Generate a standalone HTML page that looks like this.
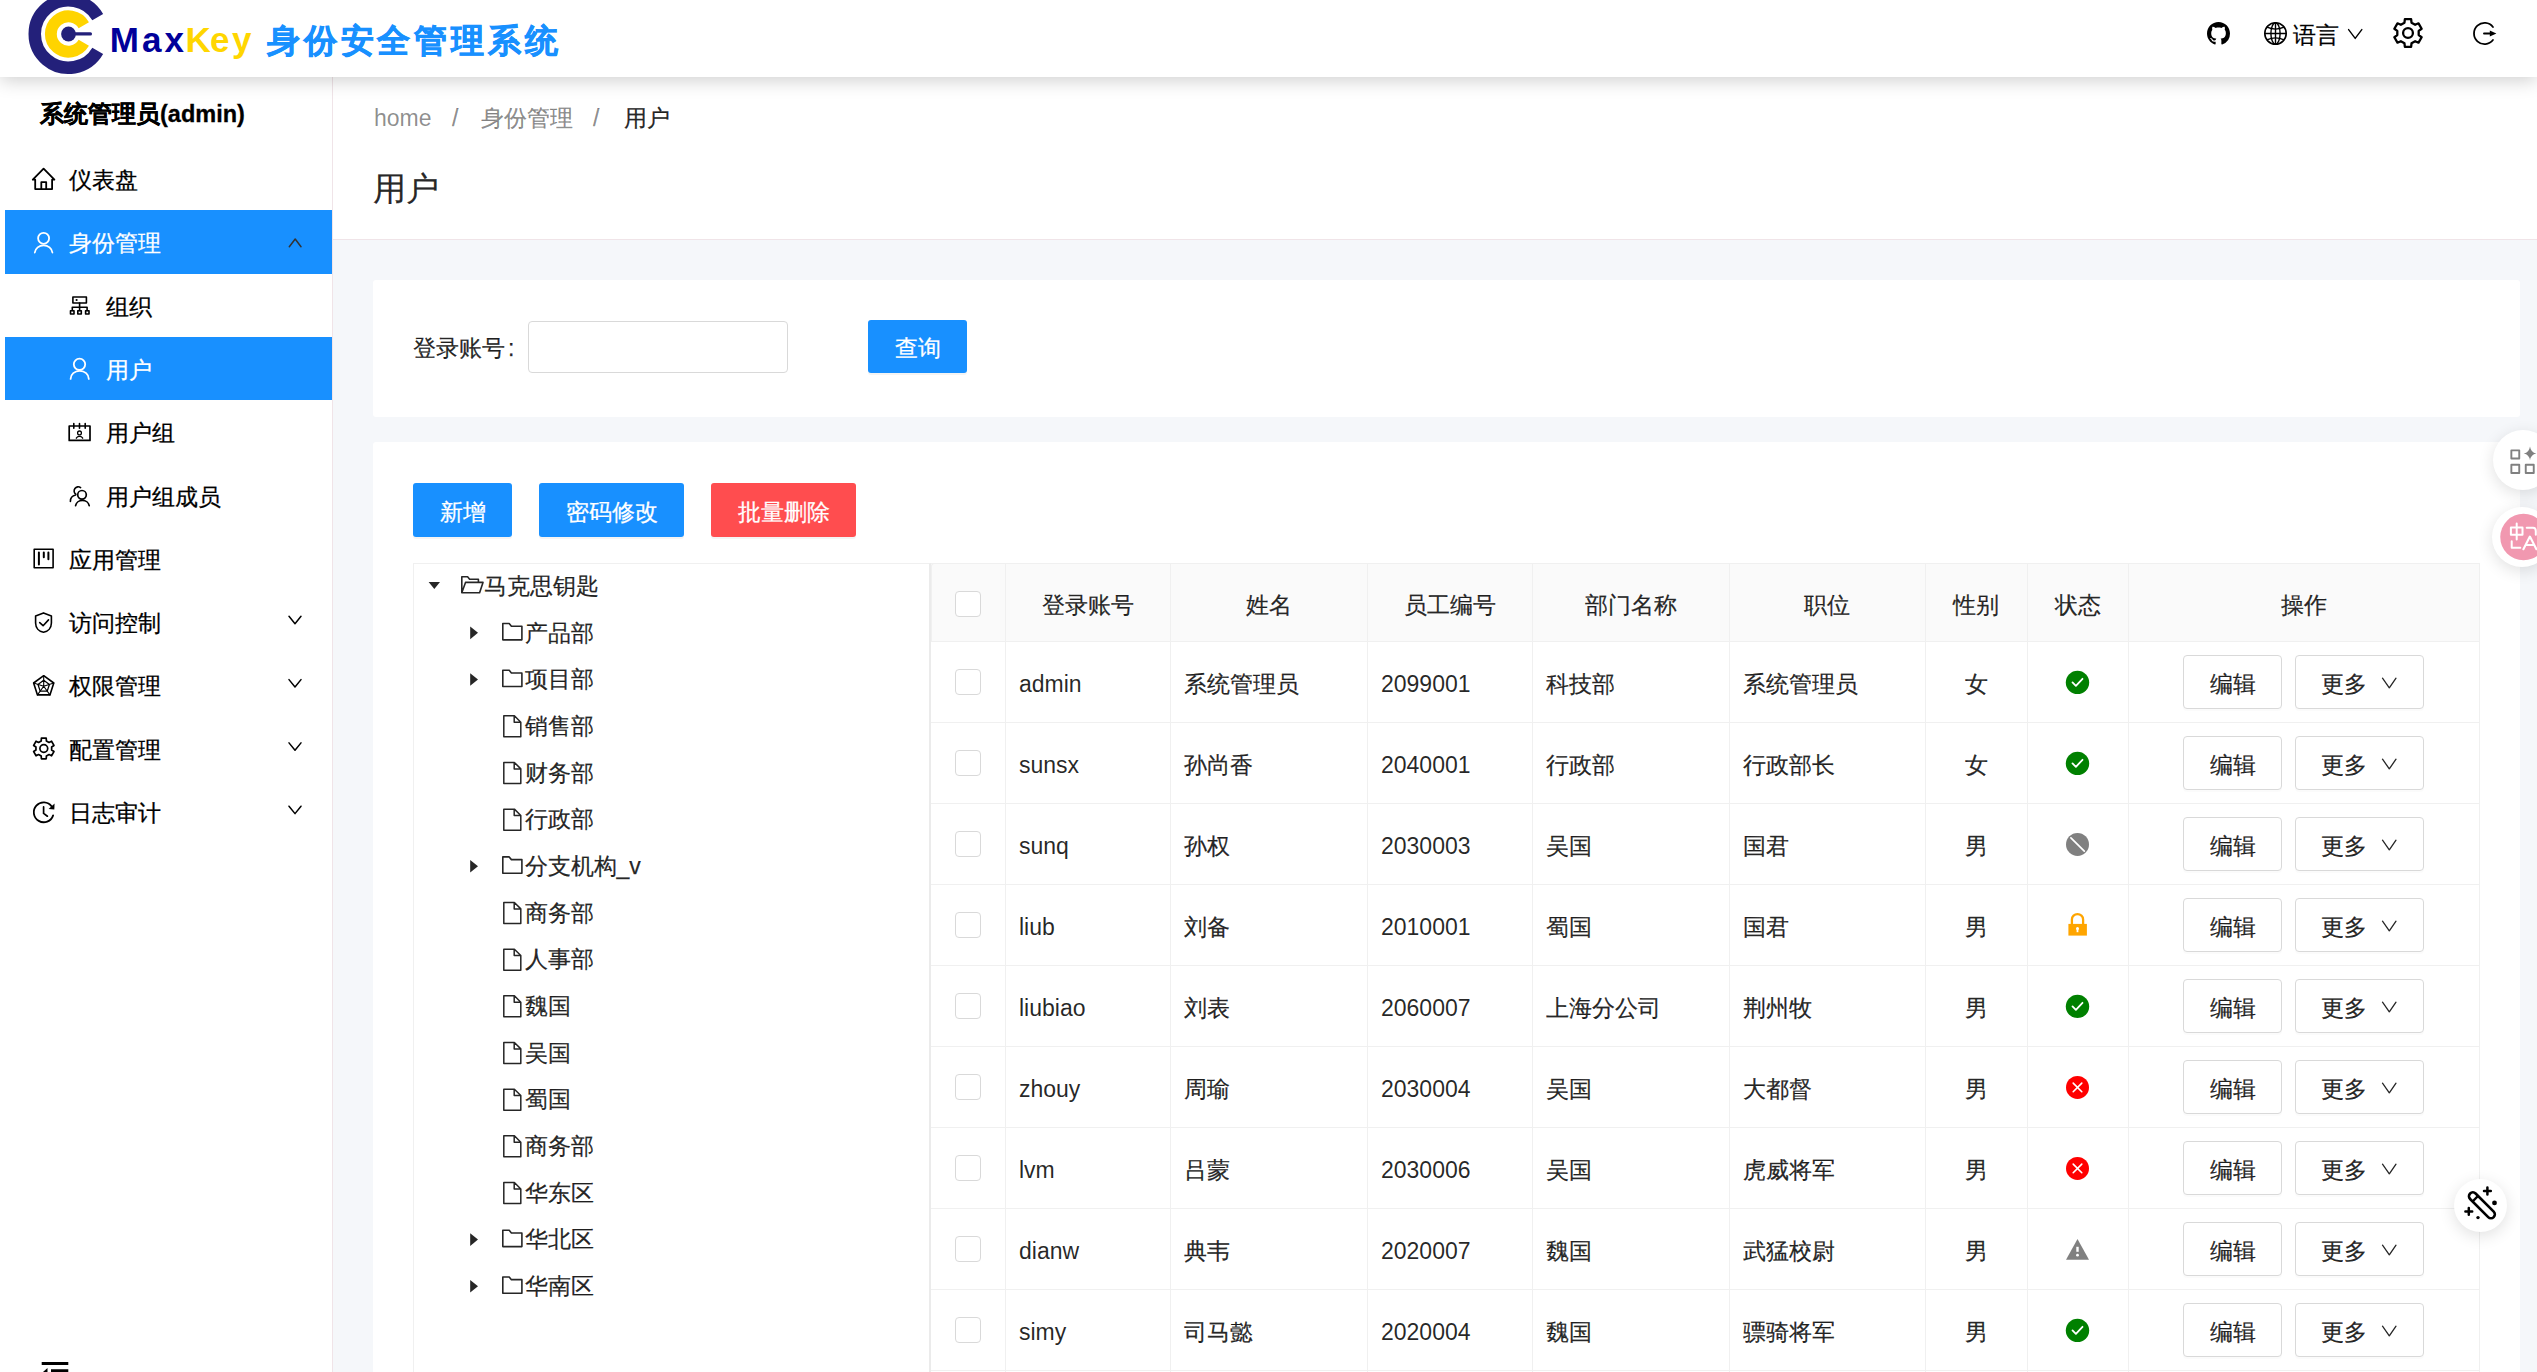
<!DOCTYPE html><html><head><meta charset="utf-8"><style>
*{box-sizing:border-box;margin:0;padding:0}
html,body{width:2537px;height:1372px;overflow:hidden}
body{position:relative;background:#f5f7fa;font-family:"Liberation Sans",sans-serif;font-size:23px;color:rgba(0,0,0,.85);-webkit-text-stroke:.25px currentColor}
.a{position:absolute;white-space:nowrap}
svg{display:block;overflow:visible}
#hdr{position:absolute;left:0;top:0;width:2537px;height:77px;background:#fff;box-shadow:0 3px 18px rgba(0,0,0,.2);z-index:5}
.mk{position:absolute;top:19.7px;font-weight:bold;font-size:35px;line-height:40px;-webkit-text-stroke:0}
.lt{-webkit-text-stroke:0 !important}
#ttl{position:absolute;left:267px;top:21px;font-weight:bold;font-size:33px;line-height:40px;color:#1890ff;letter-spacing:3.8px;white-space:nowrap;-webkit-text-stroke:.6px #1890ff}
#side{position:absolute;left:0;top:77px;width:333px;height:1295px;background:#fff;border-right:1px solid #f0e4e8;z-index:2}
.row{position:absolute;left:5px;width:327px;height:63.3px;color:#000}
.row.sel{background:#1890ff;color:#fff}
.row .t{position:absolute;top:2px;line-height:63.3px;white-space:nowrap}
#ph{position:absolute;left:333px;top:77px;width:2204px;height:163px;background:#fff;border-bottom:1px solid #f0e4e8}
.card{position:absolute;background:#fff;border-radius:3px}
.btn{position:absolute;height:54px;line-height:54px;padding-top:1.5px;text-align:center;color:#fff;background:#1890ff;border-radius:3px;box-shadow:0 2px 0 rgba(0,0,0,.045);white-space:nowrap}
.tn{position:absolute;height:46.67px;line-height:46.67px;white-space:nowrap;color:rgba(0,0,0,.85)}
.cell{position:absolute;white-space:nowrap;line-height:30px;padding-top:2.5px}
.hl{position:absolute;height:1px;background:#f0f0f0}
.vl{position:absolute;width:1px;background:#f0f0f0}
.cb{position:absolute;width:26px;height:26px;border:1px solid #d9d9d9;border-radius:4px;background:#fff}
.ob{position:absolute;height:54px;border:1px solid #d9d9d9;border-radius:4px;background:#fff;box-shadow:0 2px 0 rgba(0,0,0,.016);line-height:52px;padding-top:2px;white-space:nowrap}
.fb{position:absolute;border-radius:50%;background:#fff;box-shadow:0 4px 16px rgba(0,0,0,.12)}
</style></head><body>
<div id="hdr">
<svg class="a" style="left:0;top:0" width="110" height="77" viewBox="0 0 110 77">
<path d="M97.73 17.125 A33.75 33.75 0 1 0 97.73 50.875" fill="none" stroke="#23207a" stroke-width="12.5"/>
<path d="M83.79 25.17 A17.65 17.65 0 1 0 83.79 42.83" fill="none" stroke="#ffd400" stroke-width="11.9"/>
<circle cx="68.5" cy="34" r="7.4" fill="#23207a"/>
<rect x="68" y="32.2" width="24" height="3.2" rx="1.5" fill="#23207a"/></svg>
<span class="mk" style="left:109.8px;color:#00009a">M</span>
<span class="mk" style="left:142.1px;color:#00009a">a</span>
<span class="mk" style="left:164.6px;color:#00009a">x</span>
<span class="mk" style="left:185.5px;color:#ffd600">K</span>
<span class="mk" style="left:209.9px;color:#ffd600">e</span>
<span class="mk" style="left:232.1px;color:#ffd600">y</span>
<div id="ttl">身份安全管理系统</div>
<span class="a" style="left:2293px;top:19px;line-height:32px;color:#000">语言</span>
</div>
<div id="side">
<div class="a" style="left:40px;top:20.5px;font-weight:bold;line-height:32px;color:#000;font-size:23.5px;-webkit-text-stroke:.3px #000">系统管理员(admin)</div>
<div class="row" style="top:70.05px"><span class="t" style="left:64px">仪表盘</span></div>
<div class="row sel" style="top:133.35px"><span class="t" style="left:64px">身份管理</span></div>
<div class="row" style="top:196.65px"><span class="t" style="left:100.7px">组织</span></div>
<div class="row sel" style="top:259.95px"><span class="t" style="left:100.7px">用户</span></div>
<div class="row" style="top:323.25px"><span class="t" style="left:100.7px">用户组</span></div>
<div class="row" style="top:386.55px"><span class="t" style="left:100.7px">用户组成员</span></div>
<div class="row" style="top:449.85px"><span class="t" style="left:64px">应用管理</span></div>
<div class="row" style="top:513.15px"><span class="t" style="left:64px">访问控制</span></div>
<div class="row" style="top:576.45px"><span class="t" style="left:64px">权限管理</span></div>
<div class="row" style="top:639.75px"><span class="t" style="left:64px">配置管理</span></div>
<div class="row" style="top:703.05px"><span class="t" style="left:64px">日志审计</span></div>
</div>
<div id="ph">
<span class="a lt" style="left:41px;top:25px;line-height:32px;color:rgba(0,0,0,.45)">home</span>
<span class="a" style="left:119px;top:25px;line-height:32px;color:rgba(0,0,0,.45)">/</span>
<span class="a" style="left:148px;top:25px;line-height:32px;color:rgba(0,0,0,.45)">身份管理</span>
<span class="a" style="left:260px;top:25px;line-height:32px;color:rgba(0,0,0,.45)">/</span>
<span class="a" style="left:291px;top:25px;line-height:32px;color:rgba(0,0,0,.85)">用户</span>
<span class="a" style="left:40px;top:91.5px;line-height:40px;font-size:33px;color:rgba(0,0,0,.85)">用户</span>
</div>
<div class="card" style="left:373px;top:280px;width:2147px;height:137px"></div>
<span class="a" style="left:413px;top:332px;line-height:32px">登录账号<span style="margin-left:3px">:</span></span>
<div class="a" style="left:528px;top:321px;width:260px;height:52px;border:1px solid #d9d9d9;border-radius:4px;background:#fff"></div>
<div class="btn" style="left:868px;top:320px;width:99px;height:53px;line-height:53px">查询</div>
<div class="card" style="left:373px;top:442px;width:2147px;height:1000px"></div>
<div class="btn" style="left:413px;top:483px;width:99px">新增</div>
<div class="btn" style="left:539px;top:483px;width:145px">密码修改</div>
<div class="btn" style="left:711px;top:483px;width:145px;background:#ff4d4f">批量删除</div>
<div class="a" style="left:413px;top:563px;width:518px;height:900px;border:1px solid #f0f0f0;border-right:2px solid #ebebeb"></div>
<span class="tn" style="left:484px;top:562.90px">马克思钥匙</span>
<span class="tn" style="left:524.5px;top:609.57px">产品部</span>
<span class="tn" style="left:524.5px;top:656.24px">项目部</span>
<span class="tn" style="left:524.5px;top:702.91px">销售部</span>
<span class="tn" style="left:524.5px;top:749.58px">财务部</span>
<span class="tn" style="left:524.5px;top:796.25px">行政部</span>
<span class="tn" style="left:524.5px;top:842.92px">分支机构_v</span>
<span class="tn" style="left:524.5px;top:889.59px">商务部</span>
<span class="tn" style="left:524.5px;top:936.26px">人事部</span>
<span class="tn" style="left:524.5px;top:982.93px">魏国</span>
<span class="tn" style="left:524.5px;top:1029.60px">吴国</span>
<span class="tn" style="left:524.5px;top:1076.27px">蜀国</span>
<span class="tn" style="left:524.5px;top:1122.94px">商务部</span>
<span class="tn" style="left:524.5px;top:1169.61px">华东区</span>
<span class="tn" style="left:524.5px;top:1216.28px">华北区</span>
<span class="tn" style="left:524.5px;top:1262.95px">华南区</span>
<div class="a" style="left:931px;top:563px;width:1549px;height:78px;background:#fafafa;border-left:1px solid #f0f0f0;border-top:1px solid #f0f0f0;border-top-left-radius:3px"></div>
<div class="hl" style="left:931px;top:563px;width:1549px"></div>
<div class="hl" style="left:931px;top:641.2px;width:1549px"></div>
<div class="hl" style="left:931px;top:722.2px;width:1549px"></div>
<div class="hl" style="left:931px;top:803.2px;width:1549px"></div>
<div class="hl" style="left:931px;top:884.2px;width:1549px"></div>
<div class="hl" style="left:931px;top:965.2px;width:1549px"></div>
<div class="hl" style="left:931px;top:1046.2px;width:1549px"></div>
<div class="hl" style="left:931px;top:1127.2px;width:1549px"></div>
<div class="hl" style="left:931px;top:1208.2px;width:1549px"></div>
<div class="hl" style="left:931px;top:1289.2px;width:1549px"></div>
<div class="hl" style="left:931px;top:1370.2px;width:1549px"></div>
<div class="vl" style="left:1005px;top:563px;height:820px"></div>
<div class="vl" style="left:1170px;top:563px;height:820px"></div>
<div class="vl" style="left:1367px;top:563px;height:820px"></div>
<div class="vl" style="left:1532px;top:563px;height:820px"></div>
<div class="vl" style="left:1729px;top:563px;height:820px"></div>
<div class="vl" style="left:1925px;top:563px;height:820px"></div>
<div class="vl" style="left:2027px;top:563px;height:820px"></div>
<div class="vl" style="left:2128px;top:563px;height:820px"></div>
<div class="vl" style="left:2479px;top:563px;height:820px"></div>
<div class="cell" style="left:1005px;width:165px;top:587px;text-align:center">登录账号</div>
<div class="cell" style="left:1170px;width:197px;top:587px;text-align:center">姓名</div>
<div class="cell" style="left:1367px;width:165px;top:587px;text-align:center">员工编号</div>
<div class="cell" style="left:1532px;width:197px;top:587px;text-align:center">部门名称</div>
<div class="cell" style="left:1729px;width:196px;top:587px;text-align:center">职位</div>
<div class="cell" style="left:1925px;width:102px;top:587px;text-align:center">性别</div>
<div class="cell" style="left:2027px;width:101px;top:587px;text-align:center">状态</div>
<div class="cell" style="left:2128px;width:351px;top:587px;text-align:center">操作</div>
<div class="cb" style="left:955px;top:591px"></div>
<div class="cb" style="left:955px;top:668.7px"></div>
<div class="cell lt" style="left:1019px;top:666.7px">admin</div>
<div class="cell" style="left:1184px;top:666.7px">系统管理员</div>
<div class="cell lt" style="left:1381px;top:666.7px">2099001</div>
<div class="cell" style="left:1546px;top:666.7px">科技部</div>
<div class="cell" style="left:1743px;top:666.7px">系统管理员</div>
<div class="cell" style="left:1925px;width:102px;top:666.7px;text-align:center">女</div>
<div class="ob" style="left:2183px;top:655.2px;width:99px;text-align:center">编辑</div>
<div class="ob" style="left:2295px;top:655.2px;width:129px;padding-left:25px">更多</div>
<div class="cb" style="left:955px;top:749.7px"></div>
<div class="cell lt" style="left:1019px;top:747.7px">sunsx</div>
<div class="cell" style="left:1184px;top:747.7px">孙尚香</div>
<div class="cell lt" style="left:1381px;top:747.7px">2040001</div>
<div class="cell" style="left:1546px;top:747.7px">行政部</div>
<div class="cell" style="left:1743px;top:747.7px">行政部长</div>
<div class="cell" style="left:1925px;width:102px;top:747.7px;text-align:center">女</div>
<div class="ob" style="left:2183px;top:736.2px;width:99px;text-align:center">编辑</div>
<div class="ob" style="left:2295px;top:736.2px;width:129px;padding-left:25px">更多</div>
<div class="cb" style="left:955px;top:830.7px"></div>
<div class="cell lt" style="left:1019px;top:828.7px">sunq</div>
<div class="cell" style="left:1184px;top:828.7px">孙权</div>
<div class="cell lt" style="left:1381px;top:828.7px">2030003</div>
<div class="cell" style="left:1546px;top:828.7px">吴国</div>
<div class="cell" style="left:1743px;top:828.7px">国君</div>
<div class="cell" style="left:1925px;width:102px;top:828.7px;text-align:center">男</div>
<div class="ob" style="left:2183px;top:817.2px;width:99px;text-align:center">编辑</div>
<div class="ob" style="left:2295px;top:817.2px;width:129px;padding-left:25px">更多</div>
<div class="cb" style="left:955px;top:911.7px"></div>
<div class="cell lt" style="left:1019px;top:909.7px">liub</div>
<div class="cell" style="left:1184px;top:909.7px">刘备</div>
<div class="cell lt" style="left:1381px;top:909.7px">2010001</div>
<div class="cell" style="left:1546px;top:909.7px">蜀国</div>
<div class="cell" style="left:1743px;top:909.7px">国君</div>
<div class="cell" style="left:1925px;width:102px;top:909.7px;text-align:center">男</div>
<div class="ob" style="left:2183px;top:898.2px;width:99px;text-align:center">编辑</div>
<div class="ob" style="left:2295px;top:898.2px;width:129px;padding-left:25px">更多</div>
<div class="cb" style="left:955px;top:992.7px"></div>
<div class="cell lt" style="left:1019px;top:990.7px">liubiao</div>
<div class="cell" style="left:1184px;top:990.7px">刘表</div>
<div class="cell lt" style="left:1381px;top:990.7px">2060007</div>
<div class="cell" style="left:1546px;top:990.7px">上海分公司</div>
<div class="cell" style="left:1743px;top:990.7px">荆州牧</div>
<div class="cell" style="left:1925px;width:102px;top:990.7px;text-align:center">男</div>
<div class="ob" style="left:2183px;top:979.2px;width:99px;text-align:center">编辑</div>
<div class="ob" style="left:2295px;top:979.2px;width:129px;padding-left:25px">更多</div>
<div class="cb" style="left:955px;top:1073.7px"></div>
<div class="cell lt" style="left:1019px;top:1071.7px">zhouy</div>
<div class="cell" style="left:1184px;top:1071.7px">周瑜</div>
<div class="cell lt" style="left:1381px;top:1071.7px">2030004</div>
<div class="cell" style="left:1546px;top:1071.7px">吴国</div>
<div class="cell" style="left:1743px;top:1071.7px">大都督</div>
<div class="cell" style="left:1925px;width:102px;top:1071.7px;text-align:center">男</div>
<div class="ob" style="left:2183px;top:1060.2px;width:99px;text-align:center">编辑</div>
<div class="ob" style="left:2295px;top:1060.2px;width:129px;padding-left:25px">更多</div>
<div class="cb" style="left:955px;top:1154.7px"></div>
<div class="cell lt" style="left:1019px;top:1152.7px">lvm</div>
<div class="cell" style="left:1184px;top:1152.7px">吕蒙</div>
<div class="cell lt" style="left:1381px;top:1152.7px">2030006</div>
<div class="cell" style="left:1546px;top:1152.7px">吴国</div>
<div class="cell" style="left:1743px;top:1152.7px">虎威将军</div>
<div class="cell" style="left:1925px;width:102px;top:1152.7px;text-align:center">男</div>
<div class="ob" style="left:2183px;top:1141.2px;width:99px;text-align:center">编辑</div>
<div class="ob" style="left:2295px;top:1141.2px;width:129px;padding-left:25px">更多</div>
<div class="cb" style="left:955px;top:1235.7px"></div>
<div class="cell lt" style="left:1019px;top:1233.7px">dianw</div>
<div class="cell" style="left:1184px;top:1233.7px">典韦</div>
<div class="cell lt" style="left:1381px;top:1233.7px">2020007</div>
<div class="cell" style="left:1546px;top:1233.7px">魏国</div>
<div class="cell" style="left:1743px;top:1233.7px">武猛校尉</div>
<div class="cell" style="left:1925px;width:102px;top:1233.7px;text-align:center">男</div>
<div class="ob" style="left:2183px;top:1222.2px;width:99px;text-align:center">编辑</div>
<div class="ob" style="left:2295px;top:1222.2px;width:129px;padding-left:25px">更多</div>
<div class="cb" style="left:955px;top:1316.7px"></div>
<div class="cell lt" style="left:1019px;top:1314.7px">simy</div>
<div class="cell" style="left:1184px;top:1314.7px">司马懿</div>
<div class="cell lt" style="left:1381px;top:1314.7px">2020004</div>
<div class="cell" style="left:1546px;top:1314.7px">魏国</div>
<div class="cell" style="left:1743px;top:1314.7px">骠骑将军</div>
<div class="cell" style="left:1925px;width:102px;top:1314.7px;text-align:center">男</div>
<div class="ob" style="left:2183px;top:1303.2px;width:99px;text-align:center">编辑</div>
<div class="ob" style="left:2295px;top:1303.2px;width:129px;padding-left:25px">更多</div>
<div class="fb" style="left:2493px;top:430px;width:60px;height:60px;z-index:8"></div>
<div class="fb" style="left:2492px;top:507px;width:60px;height:60px;z-index:8"></div>
<div class="fb" style="left:2453.5px;top:1179px;width:53px;height:53px;z-index:8"></div>
<svg class="a" style="left:0;top:0;z-index:10" width="2537" height="1372" viewBox="0 0 2537 1372">
<path d="M35.2 189.1 V179.7 H32.8 L43.6 168.6 L54.4 179.7 H52.1 V189.1 Z M41.3 189.1 V182.2 H46.2 V189.1" fill="none" stroke="#000" stroke-width="1.8" stroke-linecap="round" stroke-linejoin="round" />
<circle cx="43.6" cy="238.3" r="5.5" fill="none" stroke="#fff" stroke-width="1.8"/>
<path d="M34.8 252.5 A8.85 8 0 0 1 52.4 252.5" fill="none" stroke="#fff" stroke-width="1.8" stroke-linecap="round" stroke-linejoin="round" stroke-linecap="butt"/>
<path d="M289.3 246.7 L295.2 239 L301 246.7" fill="none" stroke="#333" stroke-width="1.5" stroke-linecap="round" stroke-linejoin="round" />
<path d="M72.9 297 H86.4 V303 H72.9 Z" fill="none" stroke="#000" stroke-width="1.6" stroke-linecap="round" stroke-linejoin="round" />
<circle cx="76.6" cy="300" r="1.1" fill="#000"/>
<path d="M79.6 303 V307.3 M72.3 307.3 H87.1 M72.3 307.3 V310.5 M79.6 307.3 V310.5 M87.1 307.3 V310.5" fill="none" stroke="#000" stroke-width="1.6" stroke-linecap="round" stroke-linejoin="round" stroke-linecap="butt"/>
<path d="M70.5 310.8 H74 V314 H70.5 Z M77.8 310.8 H81.3 V314 H77.8 Z M85.6 310.8 H89 V314 H85.6 Z" fill="none" stroke="#000" stroke-width="1.6" stroke-linecap="round" stroke-linejoin="round" />
<circle cx="79.5" cy="364.3" r="5.7" fill="none" stroke="#fff" stroke-width="1.8"/>
<path d="M70.6 378.9 A9 8 0 0 1 88.8 378.9" fill="none" stroke="#fff" stroke-width="1.8" stroke-linecap="round" stroke-linejoin="round" stroke-linecap="butt"/>
<path d="M69.2 426 H90 V440.4 H69.2 Z" fill="none" stroke="#000" stroke-width="1.7" stroke-linecap="round" stroke-linejoin="round" />
<path d="M73.8 423.6 V428.3 M79.5 423.6 V428.3 M85.2 423.6 V428.3" fill="none" stroke="#000" stroke-width="1.6" stroke-linecap="round" stroke-linejoin="round" />
<circle cx="79.5" cy="432.9" r="1.9" fill="none" stroke="#000" stroke-width="1.3"/>
<path d="M76.3 438.2 A3.6 3.2 0 0 1 82.7 438.2" fill="none" stroke="#000" stroke-width="1.3" stroke-linecap="round" stroke-linejoin="round" />
<circle cx="82" cy="494.8" r="4.3" fill="none" stroke="#000" stroke-width="1.7"/>
<path d="M75.6 505.6 A6.9 6.2 0 0 1 89.2 505.6" fill="none" stroke="#000" stroke-width="1.7" stroke-linecap="round" stroke-linejoin="round" stroke-linecap="butt"/>
<path d="M80.6 487.6 A4 4 0 1 0 75.8 494.2" fill="none" stroke="#000" stroke-width="1.6" stroke-linecap="round" stroke-linejoin="round" />
<path d="M70.4 501.4 A6.5 6.5 0 0 1 75.6 495" fill="none" stroke="#000" stroke-width="1.6" stroke-linecap="round" stroke-linejoin="round" />
<path d="M34.2 549.2 H53.1 V567.7 H34.2 Z" fill="none" stroke="#000" stroke-width="1.6" stroke-linecap="round" stroke-linejoin="round" stroke-linejoin="miter"/>
<path d="M38.9 552.6 V564.6 M43.8 552.6 V557.2 M48.4 552.6 V559.2" fill="none" stroke="#000" stroke-width="2.0" stroke-linecap="round" stroke-linejoin="round" stroke-linecap="butt"/>
<path d="M43.5 612.9 L35.6 615.9 V623 C35.6 627.8 39 631.4 43.5 632.3 C48 631.4 51.4 627.8 51.4 623 V615.9 Z" fill="none" stroke="#000" stroke-width="1.6" stroke-linecap="round" stroke-linejoin="round" />
<path d="M39.7 622.6 L43.1 625.7 L48.5 619.9" fill="none" stroke="#000" stroke-width="1.6" stroke-linecap="round" stroke-linejoin="round" />
<path d="M43.70 675.70 L33.62 683.02 L37.47 694.88 L49.93 694.88 L53.78 683.02 Z" fill="none" stroke="#000" stroke-width="1.6" stroke-linecap="round" stroke-linejoin="round" />
<path d="M43.70 680.30 L37.99 684.45 L40.17 691.15 L47.23 691.15 L49.41 684.45 Z" fill="none" stroke="#000" stroke-width="1.3" stroke-linecap="round" stroke-linejoin="round" />
<path d="M43.7 686.3 L43.70 675.70 M43.7 686.3 L33.62 683.02 M43.7 686.3 L37.47 694.88 M43.7 686.3 L49.93 694.88 M43.7 686.3 L53.78 683.02" fill="none" stroke="#000" stroke-width="1.1" stroke-linecap="round" stroke-linejoin="round" />
<path d="M46.39 740.93 L46.22 738.18 L41.38 738.18 L41.21 740.93 L38.54 742.47 L36.07 741.25 L33.65 745.43 L35.95 746.96 L35.95 750.04 L33.65 751.57 L36.07 755.75 L38.54 754.53 L41.21 756.07 L41.38 758.82 L46.22 758.82 L46.39 756.07 L49.06 754.53 L51.53 755.75 L53.95 751.57 L51.65 750.04 L51.65 746.96 L53.95 745.43 L51.53 741.25 L49.06 742.47 Z" fill="none" stroke="#000" stroke-width="1.7" stroke-linecap="round" stroke-linejoin="round" />
<circle cx="43.8" cy="748.5" r="3.9" fill="none" stroke="#000" stroke-width="1.7"/>
<path d="M53.12 815.36 A9.9 9.9 0 1 1 51.71 806.48" fill="none" stroke="#000" stroke-width="1.8" stroke-linecap="round" stroke-linejoin="round" stroke-linecap="butt"/>
<path d="M54.6 803.6 L54.3 809.6 L48.6 808.9 Z" fill="#000" />
<path d="M43.6 806.9 V813.4 L47.4 816.2" fill="none" stroke="#000" stroke-width="1.7" stroke-linecap="round" stroke-linejoin="round" />
<path d="M289 616.30 L295 623.70 L301 616.30" fill="none" stroke="#000" stroke-width="1.5" stroke-linecap="round" stroke-linejoin="round" />
<path d="M289 679.60 L295 687.00 L301 679.60" fill="none" stroke="#000" stroke-width="1.5" stroke-linecap="round" stroke-linejoin="round" />
<path d="M289 742.90 L295 750.30 L301 742.90" fill="none" stroke="#000" stroke-width="1.5" stroke-linecap="round" stroke-linejoin="round" />
<path d="M289 806.20 L295 813.60 L301 806.20" fill="none" stroke="#000" stroke-width="1.5" stroke-linecap="round" stroke-linejoin="round" />
<path d="M41.7 1362 H68.3 V1365 H41.7 Z M51 1369.2 H68.3 V1372.5 H51 Z M47.5 1368 L43 1372 L47.5 1376 Z" fill="#000" />
<g transform="translate(2207 22) scale(1.4375)"><path d="M8 0C3.58 0 0 3.58 0 8c0 3.54 2.29 6.53 5.47 7.59.4.07.55-.17.55-.38 0-.19-.01-.82-.01-1.49-2.01.37-2.53-.49-2.69-.94-.09-.23-.48-.94-.82-1.13-.28-.15-.68-.52-.01-.53.63-.01 1.08.58 1.23.82.72 1.21 1.87.87 2.33.66.07-.52.28-.87.51-1.07-1.78-.2-3.64-.89-3.64-3.95 0-.87.31-1.59.82-2.15-.08-.2-.36-1.02.08-2.12 0 0 .67-.21 2.2.82.64-.18 1.32-.27 2-.27.68 0 1.36.09 2 .27 1.53-1.04 2.2-.82 2.2-.82.44 1.1.16 1.92.08 2.12.51.56.82 1.27.82 2.15 0 3.07-1.87 3.75-3.65 3.95.29.25.54.73.54 1.48 0 1.07-.01 1.93-.01 2.2 0 .21.15.46.55.38A8.013 8.013 0 0016 8c0-4.42-3.58-8-8-8z" fill="#000"/></g>
<circle cx="2275.5" cy="33.5" r="10.7" fill="none" stroke="#000" stroke-width="1.6"/>
<ellipse cx="2275.5" cy="33.5" rx="4.6" ry="10.7" fill="none" stroke="#000" stroke-width="1.4"/>
<path d="M2275.5 22.8 V44.2 M2264.8 33.5 H2286.2" fill="none" stroke="#000" stroke-width="1.4" stroke-linecap="round" stroke-linejoin="round" />
<path d="M2267.0 27.2 Q2275.5 30.9 2284.0 27.2 M2267.0 39.8 Q2275.5 36.1 2284.0 39.8" fill="none" stroke="#000" stroke-width="1.3" stroke-linecap="round" stroke-linejoin="round" />
<path d="M2348.6 29.6 L2355.2 38.4 L2361.8 29.6" fill="none" stroke="#000" stroke-width="1.4" stroke-linecap="round" stroke-linejoin="round" />
<path d="M2411.53 22.69 L2411.12 19.04 L2404.88 19.04 L2404.47 22.69 L2400.84 24.79 L2397.47 23.32 L2394.35 28.72 L2397.30 30.90 L2397.30 35.10 L2394.35 37.28 L2397.47 42.68 L2400.84 41.21 L2404.47 43.31 L2404.88 46.96 L2411.12 46.96 L2411.53 43.31 L2415.16 41.21 L2418.53 42.68 L2421.65 37.28 L2418.70 35.10 L2418.70 30.90 L2421.65 28.72 L2418.53 23.32 L2415.16 24.79 Z" fill="none" stroke="#000" stroke-width="2.3" stroke-linecap="round" stroke-linejoin="round" />
<circle cx="2408" cy="33" r="4.9" fill="none" stroke="#000" stroke-width="2.3"/>
<path d="M2492.95 26.97 A10.6 10.6 0 1 0 2492.95 40.03" fill="none" stroke="#000" stroke-width="1.8" stroke-linecap="round" stroke-linejoin="round" stroke-linecap="butt"/>
<path d="M2484 33.5 H2491" fill="none" stroke="#000" stroke-width="1.9" stroke-linecap="round" stroke-linejoin="round" stroke-linecap="butt"/>
<path d="M2489.8 30.6 L2496.4 33.5 L2489.8 36.5 Z" fill="#000" />
<path d="M428.6 582 H440 L434.3 589 Z" fill="#262626" />
<path d="M461.8 592.80 V576.80 H467.6 L469.6 579.20 H478.4 V582.40 M461.8 592.80 L465.5 582.40 H483 L479.6 592.80 Z" fill="none" stroke="#262626" stroke-width="1.6" stroke-linecap="round" stroke-linejoin="round" stroke-linejoin="miter"/>
<path d="M470.2 626.57 L478 632.87 L470.2 639.17 Z" fill="#262626" />
<path d="M502.8 639.87 V623.57 H509.2 L511.4 626.27 H521.9 V639.87 Z" fill="none" stroke="#262626" stroke-width="1.6" stroke-linecap="round" stroke-linejoin="round" stroke-linejoin="miter"/>
<path d="M470.2 673.24 L478 679.54 L470.2 685.84 Z" fill="#262626" />
<path d="M502.8 686.54 V670.24 H509.2 L511.4 672.94 H521.9 V686.54 Z" fill="none" stroke="#262626" stroke-width="1.6" stroke-linecap="round" stroke-linejoin="round" stroke-linejoin="miter"/>
<path d="M503.8 715.81 H514.4 L520.8 722.21 V736.81 H503.8 Z M514.2 715.81 V722.21 H520.8" fill="none" stroke="#262626" stroke-width="1.5" stroke-linecap="round" stroke-linejoin="round" stroke-linejoin="miter"/>
<path d="M503.8 762.48 H514.4 L520.8 768.88 V783.48 H503.8 Z M514.2 762.48 V768.88 H520.8" fill="none" stroke="#262626" stroke-width="1.5" stroke-linecap="round" stroke-linejoin="round" stroke-linejoin="miter"/>
<path d="M503.8 809.15 H514.4 L520.8 815.55 V830.15 H503.8 Z M514.2 809.15 V815.55 H520.8" fill="none" stroke="#262626" stroke-width="1.5" stroke-linecap="round" stroke-linejoin="round" stroke-linejoin="miter"/>
<path d="M470.2 859.92 L478 866.22 L470.2 872.52 Z" fill="#262626" />
<path d="M502.8 873.22 V856.92 H509.2 L511.4 859.62 H521.9 V873.22 Z" fill="none" stroke="#262626" stroke-width="1.6" stroke-linecap="round" stroke-linejoin="round" stroke-linejoin="miter"/>
<path d="M503.8 902.49 H514.4 L520.8 908.89 V923.49 H503.8 Z M514.2 902.49 V908.89 H520.8" fill="none" stroke="#262626" stroke-width="1.5" stroke-linecap="round" stroke-linejoin="round" stroke-linejoin="miter"/>
<path d="M503.8 949.16 H514.4 L520.8 955.56 V970.16 H503.8 Z M514.2 949.16 V955.56 H520.8" fill="none" stroke="#262626" stroke-width="1.5" stroke-linecap="round" stroke-linejoin="round" stroke-linejoin="miter"/>
<path d="M503.8 995.83 H514.4 L520.8 1002.23 V1016.83 H503.8 Z M514.2 995.83 V1002.23 H520.8" fill="none" stroke="#262626" stroke-width="1.5" stroke-linecap="round" stroke-linejoin="round" stroke-linejoin="miter"/>
<path d="M503.8 1042.50 H514.4 L520.8 1048.90 V1063.50 H503.8 Z M514.2 1042.50 V1048.90 H520.8" fill="none" stroke="#262626" stroke-width="1.5" stroke-linecap="round" stroke-linejoin="round" stroke-linejoin="miter"/>
<path d="M503.8 1089.17 H514.4 L520.8 1095.57 V1110.17 H503.8 Z M514.2 1089.17 V1095.57 H520.8" fill="none" stroke="#262626" stroke-width="1.5" stroke-linecap="round" stroke-linejoin="round" stroke-linejoin="miter"/>
<path d="M503.8 1135.84 H514.4 L520.8 1142.24 V1156.84 H503.8 Z M514.2 1135.84 V1142.24 H520.8" fill="none" stroke="#262626" stroke-width="1.5" stroke-linecap="round" stroke-linejoin="round" stroke-linejoin="miter"/>
<path d="M503.8 1182.51 H514.4 L520.8 1188.91 V1203.51 H503.8 Z M514.2 1182.51 V1188.91 H520.8" fill="none" stroke="#262626" stroke-width="1.5" stroke-linecap="round" stroke-linejoin="round" stroke-linejoin="miter"/>
<path d="M470.2 1233.28 L478 1239.58 L470.2 1245.88 Z" fill="#262626" />
<path d="M502.8 1246.58 V1230.28 H509.2 L511.4 1232.98 H521.9 V1246.58 Z" fill="none" stroke="#262626" stroke-width="1.6" stroke-linecap="round" stroke-linejoin="round" stroke-linejoin="miter"/>
<path d="M470.2 1279.95 L478 1286.25 L470.2 1292.55 Z" fill="#262626" />
<path d="M502.8 1293.25 V1276.95 H509.2 L511.4 1279.65 H521.9 V1293.25 Z" fill="none" stroke="#262626" stroke-width="1.6" stroke-linecap="round" stroke-linejoin="round" stroke-linejoin="miter"/>
<circle cx="2077.5" cy="682.4000000000001" r="11.7" fill="#008000"/>
<path d="M2072.5 682.4000000000001 L2075.9 685.8000000000001 L2082.5 678.8000000000001" fill="none" stroke="#fff" stroke-width="1.8" stroke-linecap="round" stroke-linejoin="round" />
<path d="M2382.5 678.20 L2389.3 687.80 L2396 678.20" fill="none" stroke="#262626" stroke-width="1.3" stroke-linecap="round" stroke-linejoin="round" />
<circle cx="2077.5" cy="763.4000000000001" r="11.7" fill="#008000"/>
<path d="M2072.5 763.4000000000001 L2075.9 766.8000000000001 L2082.5 759.8000000000001" fill="none" stroke="#fff" stroke-width="1.8" stroke-linecap="round" stroke-linejoin="round" />
<path d="M2382.5 759.20 L2389.3 768.80 L2396 759.20" fill="none" stroke="#262626" stroke-width="1.3" stroke-linecap="round" stroke-linejoin="round" />
<circle cx="2077.5" cy="844.4000000000001" r="11.5" fill="#808080"/>
<path d="M2070.9 837.8000000000001 L2084.3 851.2" fill="none" stroke="#fff" stroke-width="1.7" stroke-linecap="round" stroke-linejoin="round" stroke-linecap="butt"/>
<path d="M2382.5 840.20 L2389.3 849.80 L2396 840.20" fill="none" stroke="#262626" stroke-width="1.3" stroke-linecap="round" stroke-linejoin="round" />
<path d="M2068.4 923.9000000000001 H2086.9 V935.6000000000001 H2068.4 Z" fill="#ffa500" />
<path d="M2071.9 923.9000000000001 V919.4000000000001 A4.2 4 0 0 1 2083.1 919.4000000000001 V923.9000000000001" fill="none" stroke="#ffa500" stroke-width="2.3" stroke-linecap="round" stroke-linejoin="round" stroke-linecap="butt"/>
<path d="M2076.6 927.9000000000001 H2078.4 V932.2 H2076.6 Z" fill="#fff" />
<circle cx="2077.5" cy="928.4000000000001" r="1.5" fill="#fff"/>
<path d="M2382.5 921.20 L2389.3 930.80 L2396 921.20" fill="none" stroke="#262626" stroke-width="1.3" stroke-linecap="round" stroke-linejoin="round" />
<circle cx="2077.5" cy="1006.4000000000001" r="11.7" fill="#008000"/>
<path d="M2072.5 1006.4000000000001 L2075.9 1009.8000000000001 L2082.5 1002.8000000000001" fill="none" stroke="#fff" stroke-width="1.8" stroke-linecap="round" stroke-linejoin="round" />
<path d="M2382.5 1002.20 L2389.3 1011.80 L2396 1002.20" fill="none" stroke="#262626" stroke-width="1.3" stroke-linecap="round" stroke-linejoin="round" />
<circle cx="2077.5" cy="1087.4" r="11.5" fill="#ff0000"/>
<path d="M2073.2 1083.1000000000001 L2081.8 1091.7 M2081.8 1083.1000000000001 L2073.2 1091.7" fill="none" stroke="#fff" stroke-width="1.6" stroke-linecap="round" stroke-linejoin="round" />
<path d="M2382.5 1083.20 L2389.3 1092.80 L2396 1083.20" fill="none" stroke="#262626" stroke-width="1.3" stroke-linecap="round" stroke-linejoin="round" />
<circle cx="2077.5" cy="1168.4" r="11.5" fill="#ff0000"/>
<path d="M2073.2 1164.1000000000001 L2081.8 1172.7 M2081.8 1164.1000000000001 L2073.2 1172.7" fill="none" stroke="#fff" stroke-width="1.6" stroke-linecap="round" stroke-linejoin="round" />
<path d="M2382.5 1164.20 L2389.3 1173.80 L2396 1164.20" fill="none" stroke="#262626" stroke-width="1.3" stroke-linecap="round" stroke-linejoin="round" />
<path d="M2077.5 1238.9 L2089.0 1259.7 H2066.0 Z" fill="#808080" />
<path d="M2076.3 1246.8000000000002 H2078.7 V1251.8000000000002 H2076.3 Z" fill="#fff" />
<circle cx="2077.5" cy="1255.2" r="1.4" fill="#fff"/>
<path d="M2382.5 1245.20 L2389.3 1254.80 L2396 1245.20" fill="none" stroke="#262626" stroke-width="1.3" stroke-linecap="round" stroke-linejoin="round" />
<circle cx="2077.5" cy="1330.4" r="11.7" fill="#008000"/>
<path d="M2072.5 1330.4 L2075.9 1333.8000000000002 L2082.5 1326.8000000000002" fill="none" stroke="#fff" stroke-width="1.8" stroke-linecap="round" stroke-linejoin="round" />
<path d="M2382.5 1326.20 L2389.3 1335.80 L2396 1326.20" fill="none" stroke="#262626" stroke-width="1.3" stroke-linecap="round" stroke-linejoin="round" />
<path d="M2511.35 450.35 H2519.25 V458.45 H2511.35 Z M2511.35 464.75 H2519.25 V473.05 H2511.35 Z M2525.75 464.75 H2533.75 V473.05 H2525.75 Z" fill="none" stroke="#808080" stroke-width="1.9" stroke-linecap="round" stroke-linejoin="round" stroke-linejoin="miter"/>
<path d="M2530 446.5 Q2530.9 452.6 2536.3 453.5 Q2530.9 454.4 2530 460.3 Q2529.1 454.4 2523.8 453.5 Q2529.1 452.6 2530 446.5 Z" fill="#808080" />
<circle cx="2523.5" cy="537.1" r="23.25" fill="#f198b0"/>
<path d="M2510.9 527.4 H2522.5 V534.8 H2510.9 Z M2516.7 523.6 V539.6" fill="none" stroke="#fff" stroke-width="2.0" stroke-linecap="round" stroke-linejoin="round" stroke-linejoin="miter" stroke-linecap="butt"/>
<path d="M2511.7 541.2 V547.8 H2520.3" fill="none" stroke="#fff" stroke-width="2.0" stroke-linecap="round" stroke-linejoin="round" stroke-linejoin="miter" stroke-linecap="butt"/>
<path d="M2526.7 527.7 H2533 Q2535.8 527.7 2535.8 531 V534.7" fill="none" stroke="#fff" stroke-width="2.0" stroke-linecap="round" stroke-linejoin="round" stroke-linecap="butt"/>
<path d="M2523.4 549.2 L2529.9 536.6 L2536.4 549.2 M2525.6 545 H2534.2" fill="none" stroke="#fff" stroke-width="2.1" stroke-linecap="round" stroke-linejoin="round" stroke-linecap="butt"/>
<g transform="translate(2481.9 1205.3) rotate(45)"><rect x="-16.7" y="-3.9" width="33.4" height="7.8" rx="3.9" fill="none" stroke="#000" stroke-width="2.6"/><path d="M-9.3 -3.9 V3.9" stroke="#000" stroke-width="2.4"/></g>
<path d="M2487.4 1187.6 V1194.4 M2484 1191 H2490.8 M2468.8 1208 V1214.8 M2465.4 1211.4 H2472.2" fill="none" stroke="#000" stroke-width="2.5" stroke-linecap="round" stroke-linejoin="round" stroke-linecap="butt"/>
<circle cx="2494.5" cy="1202.9" r="2.4" fill="#000"/>
<circle cx="2478" cy="1217.6" r="1.7" fill="#000"/>
</svg>
</body></html>
